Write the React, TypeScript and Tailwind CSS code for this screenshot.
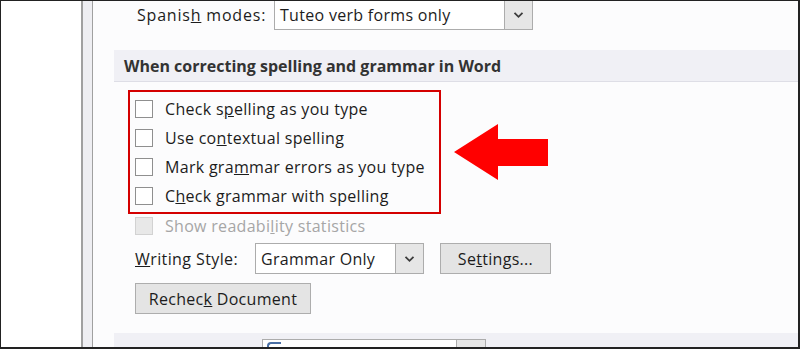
import React from "react";

const font = { fontFamily: '"Open Sans", "Noto Sans", sans-serif' };

function Chevron() {
  return (
    <svg width="11" height="8" viewBox="0 0 11 8">
      <path d="M1.5 1.8 L5.5 5.8 L9.5 1.8" fill="none" stroke="#3c3c3c" strokeWidth="1.8" />
    </svg>
  );
}

function Dropdown({ text, w, className = "" }: { text: string; w: string; className?: string }) {
  return (
    <div className={`flex h-[31px] border border-[#acacac] bg-white ${w} ${className}`}>
      <div className="flex flex-1 items-center pl-[5px] text-[16px] tracking-[0.3px] text-[#1c1c1c]">{text}</div>
      <div className="flex w-[28px] items-center justify-center border-l border-[#acacac] bg-[#e6e6e6]">
        <Chevron />
      </div>
    </div>
  );
}

function Check({ children, disabled = false }: { children: React.ReactNode; disabled?: boolean }) {
  return (
    <div className="flex h-[29px] items-center">
      <div
        className={`h-[18px] w-[18px] border ${
          disabled ? "border-[#d2d2d2] bg-[#e8e8e8]" : "border-[#8f8f8f] bg-white"
        }`}
      />
      <span
        className={`ml-[12px] text-[16px] tracking-[0.3px] ${disabled ? "text-[#a6a6a6]" : "text-[#1c1c1c]"}`}
      >
        {children}
      </span>
    </div>
  );
}

export default function App() {
  return (
    <div style={font} className="h-[349px] w-[800px] overflow-hidden bg-[#222]">
      <div className="ml-[1px] mt-[1px] flex h-[346px] w-[797px] bg-[#fcfcfd]">
        <div className="w-[80px] bg-white" />
        <div className="w-[2px] bg-[#a0a0a0]" />
        <div className="w-[9px] bg-[#eeeef2]" />
        <div className="w-[1px] bg-[#a0a0a0]" />
        <div className="relative flex-1 overflow-hidden">
          {/* Spanish modes */}
          <div className="mt-[-2px] flex h-[31px] items-center">
            <span className="ml-[44px] w-[137px] text-[16px] tracking-[0.8px] text-[#1c1c1c]">
              Spanis<u>h</u> modes:
            </span>
            <Dropdown text="Tuteo verb forms only" w="w-[259px]" />
          </div>
          {/* section header */}
          <div className="ml-[21px] mt-[20px] flex h-[32px] items-center border-b border-[#dedee6] bg-[#f0f0f5] pl-[10px] text-[16px] font-bold text-[#333]">
            When correcting spelling and grammar in Word
          </div>
          {/* red box */}
          <div className="ml-[35px] mt-[8px] w-[313px] border-2 border-[#d40000] pb-[2px] pl-[5px] pt-[2px]">
            <Check>
              Check s<u>p</u>elling as you type
            </Check>
            <Check>
              Use co<u>n</u>textual spelling
            </Check>
            <Check>
              Mark gra<u>m</u>mar errors as you type
            </Check>
            <Check>
              C<u>h</u>eck grammar with spelling
            </Check>
          </div>
          <div className="ml-[42px] mt-[-3px]">
            <Check disabled>
              Show readabi<u>l</u>ity statistics
            </Check>
          </div>
          {/* Writing style */}
          <div className="mt-[3px] flex h-[31px] items-center">
            <span className="ml-[42px] w-[120px] text-[16px] tracking-[0.4px] text-[#1c1c1c]">
              <u>W</u>riting Style:
            </span>
            <Dropdown text="Grammar Only" w="w-[169px]" />
            <button className="ml-[16px] h-[31px] w-[111px] border border-[#adadad] bg-[#e4e4e4] text-[16px] tracking-[0.3px] text-[#1c1c1c]">
              Se<u>t</u>tings...
            </button>
          </div>
          <button className="ml-[42px] mt-[9px] h-[31px] w-[176px] border border-[#adadad] bg-[#e4e4e4] text-[16px] tracking-[0.3px] text-[#1c1c1c]">
            Rechec<u>k</u> Document
          </button>
          {/* bottom section */}
          <div className="ml-[21px] mt-[19px] flex h-[20px] bg-[#f0f0f5] pt-[6px]">
            <div className="ml-[148px] flex h-[20px] w-[224px] border border-[#acacac] bg-white">
              <div className="flex-1 pl-[4px] pt-[2px]">
                <div className="h-[10px] w-[14px] rounded-tl-[4px] border-l-2 border-t-2 border-[#4a6fa5]" />
              </div>
              <div className="w-[29px] border-l border-[#acacac] bg-[#e6e6e6]" />
            </div>
          </div>
          {/* red arrow overlay */}
          <svg className="absolute left-[361px] top-[122px]" width="96" height="58" viewBox="0 0 96 58">
            <polygon points="0,29 44,1 44,16 94,16 94,43 44,43 44,57" fill="#ff0000" />
          </svg>
        </div>
      </div>
    </div>
  );
}
